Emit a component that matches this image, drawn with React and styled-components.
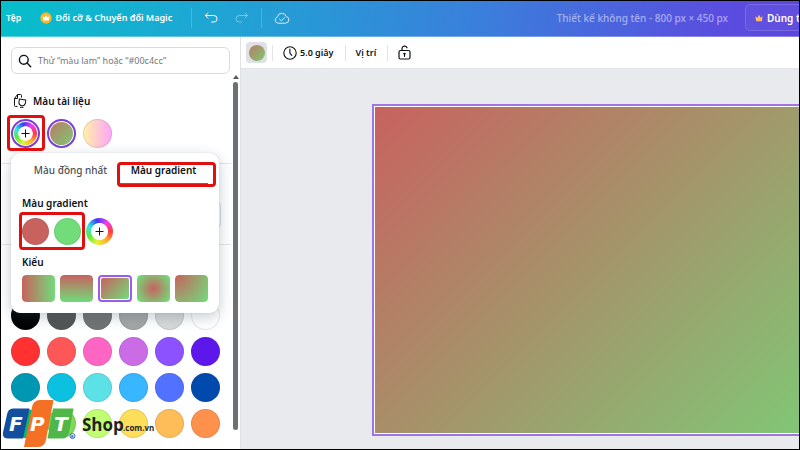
import React from 'react';
import styled, { createGlobalStyle, css } from 'styled-components';

const GlobalStyle = createGlobalStyle`
  * {
    box-sizing: border-box;
  }
  body {
    margin: 0;
    font-family: 'Noto Sans', 'Open Sans', sans-serif;
    font-size: 10px;
    line-height: 16px;
    color: #0d1216;
  }
  button,
  input {
    font: inherit;
    color: inherit;
    margin: 0;
  }
  button {
    padding: 0;
    border: 0;
    background: none;
    cursor: pointer;
  }
  h2,
  h3 {
    margin: 0;
    font-size: 10px;
    font-weight: 600;
  }
`;

const wheel = 'conic-gradient(from 90deg, #ff3b3b, #ffb02e, #e6f23a, #5bea3c, #30e8e0, #3b3bf5, #f53bf0, #ff3b3b)';

const Page = styled.div`
  position: relative;
  display: flex;
  flex-direction: column;
  height: 100vh;
  border: 1px solid #000;
  overflow: hidden;
`;

const Header = styled.header`
  display: flex;
  align-items: center;
  flex: none;
  height: 36px;
  padding: 0 0 2px 5px;
  color: #fff;
  background: linear-gradient(100deg, #06bfca 0%, #1fa5d4 27%, #3a7fdb 60%, #5a4ddf 90%, #5c46dd 100%);
  border-bottom: 1px solid rgba(255, 255, 255, 0.3);
  overflow: hidden;
`;

const MenuButton = styled.button`
  display: flex;
  align-items: center;
  gap: 3px;
  flex: none;
  margin-right: 19px;
  font-size: 9px;
  font-weight: 600;
  white-space: nowrap;
`;

const HeaderDivider = styled.span`
  flex: none;
  width: 1px;
  height: 20px;
  background: rgba(255, 255, 255, 0.2);
`;

const HeaderIcon = styled.button`
  display: flex;
  flex: none;
  opacity: ${(props) => (props.disabled ? 0.4 : 1)};
`;

const IconGroup = styled.div`
  display: flex;
  gap: 17px;
  padding: 0 12px;
`;

const DocTitle = styled.span`
  flex: none;
  margin-left: auto;
  margin-right: 17px;
  color: rgba(255, 255, 255, 0.5);
  font-weight: 500;
`;

const TrialButton = styled.button`
  display: flex;
  align-items: center;
  gap: 4px;
  flex: none;
  width: 140px;
  height: 27px;
  margin-right: -86px;
  padding-left: 9px;
  border: 1px solid rgba(255, 255, 255, 0.15);
  border-radius: 5px;
  background: rgba(255, 255, 255, 0.04);
  font-weight: 600;
  white-space: nowrap;
`;

const Body = styled.div`
  display: flex;
  flex: 1;
  min-height: 0;
`;

const Panel = styled.aside`
  display: flex;
  flex-direction: column;
  flex: none;
  width: 240px;
  border-right: 1px solid #dfe1e6;
  background: #fff;
`;

const SearchBox = styled.label`
  display: flex;
  align-items: center;
  gap: 6px;
  flex: none;
  height: 27px;
  margin: 10px 10px 0;
  padding: 0 6px;
  border: 1px solid #d9dbdf;
  border-radius: 6px;
  font-size: 9px;
  input {
    flex: 1;
    min-width: 0;
    padding: 0;
    border: 0;
    outline: none;
    background: none;
  }
  input::placeholder {
    color: #73777d;
    opacity: 1;
  }
`;

const PanelScroll = styled.div`
  display: flex;
  flex: 1;
  min-height: 0;
`;

const PanelContent = styled.div`
  flex: 1;
`;

const ScrollTrack = styled.div`
  display: flex;
  flex-direction: column;
  align-items: center;
  gap: 3px;
  width: 9px;
  padding: 1px 2px 19px;
`;

const ScrollArrow = styled.span`
  border: 3px solid transparent;
  border-top: 0;
  border-bottom: 4px solid #55585c;
`;

const ScrollThumb = styled.span`
  flex: 1;
  width: 5px;
  border-radius: 3px;
  background: #6c7075;
`;

const Section = styled.section`
  padding: ${(props) => props.$pad};
  border-bottom: ${(props) => (props.$last ? 0 : '1px solid #e3e5e8')};
`;

const SectionTitle = styled.h2`
  display: flex;
  align-items: center;
  gap: 6px;
  padding-left: 3px;
  margin-bottom: 10px;
`;

const BrandField = styled.button`
  display: block;
  width: 100%;
  height: 26px;
  border: 1px solid #d9dbdf;
  border-radius: 4px;
`;

const SwatchArea = styled.div`
  position: relative;
`;

const SwatchGrid = styled.div`
  display: grid;
  grid-template-columns: repeat(6, 29px);
  gap: 7px;
`;

const Swatch = styled.button`
  width: 29px;
  height: 29px;
  border-radius: 50%;
  background: ${(props) => props.$fill};
  box-shadow: inset 0 0 0 1px rgba(64, 87, 109, 0.14);
  ${(props) =>
    props.$selected &&
    css`
      padding: 1px;
      border: 2px solid #7b3fd6;
      background: #fff;
      box-shadow: none;
      &::before {
        content: '';
        display: block;
        height: 100%;
        border-radius: 50%;
        background: ${props.$fill};
      }
    `}
`;

const AddColor = styled.button`
  display: grid;
  place-items: center;
  width: ${(props) => props.$size}px;
  height: ${(props) => props.$size}px;
  padding: ${(props) => (props.$ring ? 1 : 0)}px;
  border: ${(props) => (props.$ring ? '2px solid #7b3fd6' : 0)};
  border-radius: 50%;
  background: #fff;
`;

const Wheel = styled.span`
  display: grid;
  place-items: center;
  width: 100%;
  height: 100%;
  border-radius: 50%;
  background: radial-gradient(circle closest-side, #fff 60%, transparent 66%), ${wheel};
`;

const Popover = styled.div`
  position: absolute;
  top: calc(100% + 5px);
  left: 0;
  width: 208px;
  height: 160px;
  padding: 0 11px;
  border-radius: 9px;
  background: #fff;
  box-shadow: 0 0 1px rgba(64, 87, 109, 0.3), 0 4px 14px rgba(64, 87, 109, 0.3);
  z-index: 2;
`;

const TabList = styled.div`
  display: grid;
  grid-template-columns: 12fr 11fr;
  height: 31px;
  margin-bottom: 11px;
`;

const Tab = styled.button`
  padding-top: 4px;
  border-bottom: 1px solid ${(props) => (props.$active ? '#8b3dff' : 'transparent')};
  color: ${(props) => (props.$active ? '#0d1216' : '#4c5056')};
  font-weight: ${(props) => (props.$active ? 600 : 500)};
  white-space: nowrap;
`;

const StopRow = styled.div`
  display: flex;
  gap: 5px;
  margin: 7px 0 9px;
`;

const Stop = styled.button`
  width: 27px;
  height: 27px;
  border-radius: 50%;
  background: ${(props) => props.$fill};
  box-shadow: inset 0 0 0 1px rgba(64, 87, 109, 0.1);
`;

const StyleRow = styled.div`
  display: grid;
  grid-template-columns: repeat(5, 1fr);
  gap: 5px;
  margin-top: 5px;
`;

const StyleTile = styled.button`
  height: 27px;
  padding: ${(props) => (props.$selected ? 1 : 0)}px;
  border: ${(props) => (props.$selected ? '2px solid #9a5cf0' : 0)};
  border-radius: 4px;
  overflow: hidden;
  span {
    display: block;
    height: 100%;
    border-radius: ${(props) => (props.$selected ? 2 : 4)}px;
    background: ${(props) => props.$fill};
  }
`;

const Highlight = styled.span`
  position: absolute;
  top: ${(props) => props.$top}px;
  left: ${(props) => props.$left}px;
  width: ${(props) => props.$width}px;
  height: ${(props) => props.$height}px;
  border: 3px solid #e20f0f;
  border-radius: 4px;
  pointer-events: none;
  z-index: 3;
`;

const Main = styled.main`
  display: flex;
  flex-direction: column;
  flex: 1;
  min-width: 0;
`;

const Toolbar = styled.div`
  display: flex;
  align-items: center;
  flex: none;
  height: 32px;
  padding-left: 5px;
  border-bottom: 1px solid #e3e4e8;
  background: #fff;
`;

const FillButton = styled.button`
  display: grid;
  place-items: center;
  width: 21px;
  height: 21px;
  border-radius: 4px;
  background: #dfe1e6;
  span {
    width: 16px;
    height: 16px;
    border-radius: 50%;
    background: linear-gradient(135deg, #b97a66, #7fc873);
  }
`;

const ToolDivider = styled.span`
  width: 1px;
  height: 16px;
  margin-left: ${(props) => (props.$first ? 5 : 11)}px;
  margin-right: 10px;
  background: #e1e3e6;
`;

const ToolButton = styled.button`
  display: flex;
  align-items: center;
  gap: 3px;
  font-size: 9px;
  font-weight: 600;
`;

const Workspace = styled.div`
  display: flex;
  flex: 1;
  min-height: 0;
  padding: 35px 0 13px 131px;
  background: #e9eaee;
  overflow: hidden;
`;

const Artboard = styled.div`
  flex: none;
  aspect-ratio: 16 / 9;
  padding: 1px;
  border: 2px solid #a273e3;
  background: #fff;
  div {
    height: 100%;
    background: linear-gradient(135deg, #c8625f, #72db7a);
  }
`;

const Watermark = styled.svg`
  position: absolute;
  left: 2px;
  bottom: 1px;
  pointer-events: none;
  z-index: 4;
`;

const start = '#c8625f';
const end = '#72db7a';

const palette = [
  '#000000', '#545454', '#737373', '#a6a6a6', '#d9d9d9', '#ffffff',
  '#ff3131', '#ff5757', '#ff66c4', '#cb6ce6', '#8c52ff', '#5e17eb',
  '#0097b2', '#0cc0df', '#5ce1e6', '#38b6ff', '#5271ff', '#004aad',
  '#00bf63', '#7ed957', '#c1ff72', '#ffde59', '#ffbd59', '#ff914d',
];

const gradientStyles = [
  { name: 'Ngang', fill: `linear-gradient(90deg, ${start}, ${end})` },
  { name: 'Dọc', fill: `linear-gradient(180deg, ${start}, ${end})` },
  { name: 'Chéo', fill: `linear-gradient(135deg, ${start}, ${end})`, selected: true },
  { name: 'Tròn', fill: `radial-gradient(circle, ${start}, ${end} 90%)` },
  { name: 'Góc', fill: `radial-gradient(circle at 0 0, ${start}, ${end})` },
];

const Plus = () => (
  <svg width="9" height="9" viewBox="0 0 9 9" stroke="#0d1216" strokeWidth="1">
    <path d="M4.5 0.5v8M0.5 4.5h8" />
  </svg>
);

const CrownCoin = () => (
  <svg width="12" height="12" viewBox="0 0 12 12">
    <circle cx="6" cy="6" r="5.7" fill="#f5b82e" />
    <path d="M2.6 4.2l1.9 1.4L6 3l1.5 2.6 1.9-1.4-.7 4.3H3.3z" fill="#fff" />
  </svg>
);

const Crown = () => (
  <svg width="8" height="8" viewBox="0 0 8 8">
    <path d="M.3 2.2l2 1.6L4 .8l1.7 3 2-1.6-.9 5H1.2z" fill="#fdbc68" />
  </svg>
);

const UndoIcon = () => (
  <svg width="14" height="14" viewBox="0 0 14 14" fill="none" stroke="#fff" strokeLinecap="round" strokeLinejoin="round">
    <path d="M4 2L1.3 4.5 4 7M1.5 4.5h8.3a3.2 3.2 0 0 1 0 6.5H7.6" />
  </svg>
);

const RedoIcon = () => (
  <svg width="14" height="14" viewBox="0 0 14 14" fill="none" stroke="#fff" strokeLinecap="round" strokeLinejoin="round">
    <path d="M10 2l2.7 2.5L10 7M12.5 4.5H4.2a3.2 3.2 0 0 0 0 6.5h2.2" />
  </svg>
);

const CloudIcon = () => (
  <svg width="16" height="14" viewBox="0 0 16 14" fill="none" stroke="#d4ebf9" strokeLinecap="round" strokeLinejoin="round">
    <path d="M4 12.2a3.2 3.2 0 0 1-.7-6.2 4.6 4.6 0 0 1 8.9-.5 3.4 3.4 0 0 1-.3 6.7z" />
    <path d="M5.6 8.2l1.8 1.7 3.2-3.4" />
  </svg>
);

const SearchIcon = () => (
  <svg width="14" height="14" viewBox="0 0 14 14" fill="none" stroke="#0d1216" strokeWidth="1.4" strokeLinecap="round">
    <circle cx="5.8" cy="5.8" r="4.4" />
    <path d="M9.1 9.1l3.6 3.6" />
  </svg>
);

const DocColorIcon = () => (
  <svg width="13" height="14" viewBox="0 0 13 14" fill="none" stroke="#0d1216" strokeLinejoin="round">
    <path d="M3.5 12.5h-2a1 1 0 0 1-1-1v-7l3-4h3a1 1 0 0 1 1 1v2" />
    <path d="M.5 4.5h3v-4" />
    <path d="M5 5.500h6.500v3.500a3.300 3.300 0 0 1-6.500 0z" transform="rotate(8 8 8)" />
    <path d="M6 13.300h3.500" />
  </svg>
);

const ClockIcon = () => (
  <svg width="14" height="14" viewBox="0 0 14 14" fill="none" stroke="#0d1216" strokeWidth="1.1" strokeLinecap="round" strokeLinejoin="round">
    <circle cx="7" cy="7" r="6.2" />
    <path d="M6.9 3v4.2l1.8 2.2" />
  </svg>
);

const LockIcon = () => (
  <svg width="13" height="15" viewBox="0 0 13 15" fill="none" stroke="#0d1216" strokeWidth="1.2" strokeLinecap="round" strokeLinejoin="round">
    <rect x="1" y="5.5" width="11" height="8.5" rx="1.5" />
    <path d="M4 5.3V3.6a2.6 2.6 0 0 1 5-.8M6.5 8.3v3M5.7 8.6h1.6" />
  </svg>
);

const ShopLogo = () => (
  <Watermark width="153" height="48" viewBox="3 400 153 48">
    <path d="M13 408.500h16.500L23 438.500H8q-6 0-5-6l4-18q1-6 6-6z" fill="#124f9f" />
    <path d="M53 408.500h20.500l-4 22q-1.500 8-7 8H47.500z" fill="#4eb748" />
    <path d="M40 400h13.500l-7.500 40q-1.500 7-8 7H24l8-40q1.500-7 8-7z" fill="#f37024" />
    <g fill="#fff" fontFamily="'DejaVu Sans', sans-serif" fontWeight="700" fontStyle="italic" fontSize="20">
      <text x="9" y="431">F</text>
      <text x="30" y="431">P</text>
      <text x="54" y="431">T</text>
    </g>
    <circle cx="72.5" cy="436" r="2.5" fill="#fff" stroke="#124f9f" strokeWidth=".8" />
    <text x="71" y="438" fontSize="4" fontWeight="700" fill="#124f9f">R</text>
    <g fill="#231f20" fontFamily="'Open Sans', sans-serif" fontWeight="700">
      <text x="82" y="431" fontSize="17">Shop</text>
      <text x="123" y="431" fontSize="8">.com.vn</text>
    </g>
  </Watermark>
);

const GradientPopover = () => (
  <Popover role="dialog" aria-label="Màu gradient">
    <TabList role="tablist">
      <Tab role="tab" aria-selected="false">Màu đồng nhất</Tab>
      <Tab role="tab" aria-selected="true" $active>Màu gradient</Tab>
    </TabList>
    <h3>Màu gradient</h3>
    <StopRow>
      <Stop $fill={start} aria-label={start} />
      <Stop $fill={end} aria-label={end} />
      <AddColor $size={27} aria-label="Thêm màu">
        <Wheel><Plus /></Wheel>
      </AddColor>
    </StopRow>
    <h3>Kiểu</h3>
    <StyleRow>
      {gradientStyles.map((item) => (
        <StyleTile key={item.name} $fill={item.fill} $selected={item.selected} aria-label={item.name}>
          <span />
        </StyleTile>
      ))}
    </StyleRow>
    <Highlight $top={9} $left={106} $width={99} $height={25} />
    <Highlight $top={59} $left={8} $width={66} $height={38} />
  </Popover>
);

const App = () => {
  return (
    <Page>
      <GlobalStyle />
      <Header>
        <MenuButton>Tệp</MenuButton>
        <MenuButton>
          <CrownCoin />
          Đổi cỡ &amp; Chuyển đổi Magic
        </MenuButton>
        <HeaderDivider />
        <IconGroup>
          <HeaderIcon aria-label="Hoàn tác"><UndoIcon /></HeaderIcon>
          <HeaderIcon aria-label="Làm lại" disabled><RedoIcon /></HeaderIcon>
        </IconGroup>
        <HeaderDivider />
        <IconGroup>
          <HeaderIcon aria-label="Đã lưu"><CloudIcon /></HeaderIcon>
        </IconGroup>
        <DocTitle>Thiết kế không tên - 800 px × 450 px</DocTitle>
        <TrialButton>
          <Crown />
          Dùng thử
        </TrialButton>
      </Header>
      <Body>
        <Panel>
          <SearchBox>
            <SearchIcon />
            <input type="text" aria-label="Tìm màu" placeholder="Thử “màu lam” hoặc “#00c4cc”" />
          </SearchBox>
          <PanelScroll>
            <PanelContent>
              <Section $pad="19px 10px 15px">
                <SectionTitle>
                  <DocColorIcon />
                  Màu tài liệu
                </SectionTitle>
                <SwatchArea>
                  <SwatchGrid>
                    <AddColor $size={29} $ring aria-label="Thêm màu mới">
                      <Wheel><Plus /></Wheel>
                    </AddColor>
                    <Swatch $fill="linear-gradient(135deg, #b97a66, #7fc873)" $selected aria-label="Gradient đỏ lục" />
                    <Swatch $fill="linear-gradient(90deg, #fff2a8, #ffa3fa)" aria-label="Gradient vàng hồng" />
                  </SwatchGrid>
                  <Highlight $top={-4} $left={-4} $width={38} $height={36} />
                  <GradientPopover />
                </SwatchArea>
              </Section>
              <Section $pad="38px 10px 16px">
                <BrandField aria-label="Bộ thương hiệu" />
              </Section>
              <Section $pad="56px 10px 11px" $last>
                <SwatchGrid>
                  {palette.map((color) => (
                    <Swatch key={color} $fill={color} aria-label={color} />
                  ))}
                </SwatchGrid>
              </Section>
            </PanelContent>
            <ScrollTrack>
              <ScrollArrow />
              <ScrollThumb />
            </ScrollTrack>
          </PanelScroll>
        </Panel>
        <Main>
          <Toolbar>
            <FillButton aria-label="Màu nền"><span /></FillButton>
            <ToolDivider $first />
            <ToolButton>
              <ClockIcon />
              5.0 giây
            </ToolButton>
            <ToolDivider />
            <ToolButton>Vị trí</ToolButton>
            <ToolDivider />
            <ToolButton aria-label="Khóa"><LockIcon /></ToolButton>
          </Toolbar>
          <Workspace>
            <Artboard><div /></Artboard>
          </Workspace>
        </Main>
      </Body>
      <ShopLogo />
    </Page>
  );
};

export default App;
